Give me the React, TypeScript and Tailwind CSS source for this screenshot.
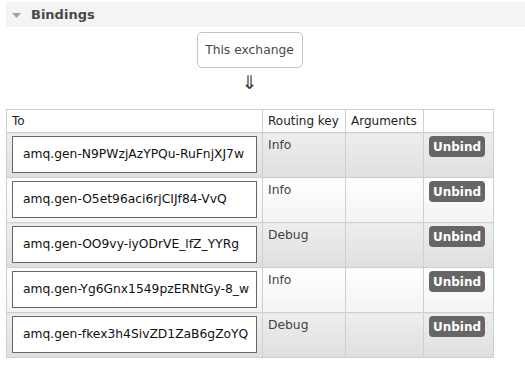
const bindings = [
  { to: 'amq.gen-N9PWzjAzYPQu-RuFnjXJ7w', key: 'Info' },
  { to: 'amq.gen-O5et96aci6rjCIJf84-VvQ', key: 'Info' },
  { to: 'amq.gen-OO9vy-iyODrVE_lfZ_YYRg', key: 'Debug' },
  { to: 'amq.gen-Yg6Gnx1549pzERNtGy-8_w', key: 'Info' },
  { to: 'amq.gen-fkex3h4SivZD1ZaB6gZoYQ', key: 'Debug' },
];

export default function App() {
  return (
    <div className="min-h-[365px] bg-white pl-[6px] pt-[2px] font-['Verdana','DejaVu_Sans',sans-serif] text-[12px] text-[#444]">
      {/* Section header */}
      <div className="flex h-[25px] items-center gap-[10px] bg-[#f4f4f4] pl-[6px]">
        <svg width="9" height="5" viewBox="0 0 9 5" className="mt-[1px]">
          <polygon points="0,0 9,0 4.5,5" fill="#a0a0a0" />
        </svg>
        <span className="text-[13px] font-bold text-[#484848]">Bindings</span>
      </div>

      <div className="flex flex-col items-center pr-[32px]">
        <div className="mt-[5px] flex h-[36px] w-[106px] items-center justify-center rounded-[5px] border border-[#c4c4c4] bg-white text-[12.3px] text-[#484848]">
          This exchange
        </div>
        <div className="mt-[4px] h-[20px] text-[19px] leading-[20px] text-[#333]">⇓</div>
      </div>

      <table className="mt-[17px] w-[487px] table-fixed border-collapse">
        <colgroup>
          <col className="w-[256px]" />
          <col className="w-[83px]" />
          <col className="w-[78px]" />
          <col className="w-[70px]" />
        </colgroup>
        <thead>
          <tr className="h-[23px] bg-white text-left text-[#222]">
            <th className="whitespace-nowrap border border-[#cfcfcf] px-[5px] font-normal">To</th>
            <th className="whitespace-nowrap border border-[#cfcfcf] px-[5px] font-normal">Routing key</th>
            <th className="whitespace-nowrap border border-[#cfcfcf] px-[5px] font-normal">Arguments</th>
            <th className="border border-[#cfcfcf] px-[5px] font-normal"></th>
          </tr>
        </thead>
        <tbody>
          {bindings.map((b, i) => {
            const bg =
              i % 2 === 0
                ? 'bg-[linear-gradient(#eeeeee,#dfdfdf)]'
                : 'bg-[linear-gradient(#ffffff,#f3f3f3)]';
            return (
              <tr key={b.to} className="h-[45px]">
                <td className={`border border-[#cfcfcf] px-[5px] py-[3px] align-top ${bg}`}>
                  <div className="flex h-[37px] items-center whitespace-nowrap border border-[#666] bg-white pl-[10px] text-[12.3px] text-[#111]">
                    {b.to}
                  </div>
                </td>
                <td className={`border border-[#cfcfcf] px-[5px] pt-[3px] align-top text-[12.3px] ${bg}`}>{b.key}</td>
                <td className={`border border-[#cfcfcf] align-top ${bg}`}></td>
                <td className={`border border-[#cfcfcf] px-[5px] pt-[3px] align-top ${bg}`}>
                  <button className="h-[21px] w-[56px] rounded-[4px] bg-[#666] text-[12px] font-bold text-white">
                    Unbind
                  </button>
                </td>
              </tr>
            );
          })}
        </tbody>
      </table>
    </div>
  );
}
